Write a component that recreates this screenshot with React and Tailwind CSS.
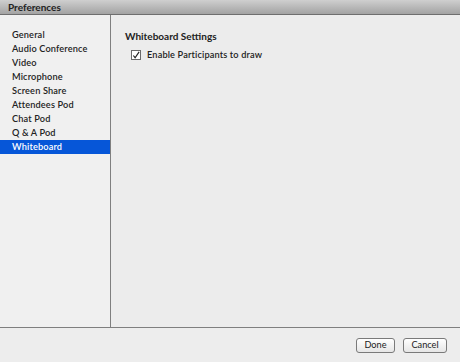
import React from "react";

const items = ["General","Audio Conference","Video","Microphone","Screen Share","Attendees Pod","Chat Pod","Q & A Pod","Whiteboard"];

export default function App() {
  return (
    <div className="w-[460px] h-[362px] flex flex-col bg-[#ededed] text-[#1a1a1a] overflow-hidden" style={{fontFamily: 'Lato, "Open Sans", sans-serif'}}>
      <div className="h-[15px] shrink-0 bg-gradient-to-b from-[#cfcfcf] to-[#a3a3a3] border-b border-[#6e6e6e] flex items-center pl-[8px] text-[10px] font-bold text-[#222] leading-none">
        Preferences
      </div>
      <div className="flex flex-1 border-b border-[#7f7f7f]">
        <div className="w-[111px] shrink-0 border-r border-[#7f7f7f] bg-[#f0f0f0] pt-[13px] flex flex-col">
          {items.map((t) => (
            <div key={t} className={"h-[14px] pl-[12px] flex items-center text-[9.2px] font-semibold tracking-[0.15px] leading-none " + (t === "Whiteboard" ? "bg-[#0656d8] text-white" : "text-[#222]")}>
              {t}
            </div>
          ))}
        </div>
        <div className="flex-1 bg-[#ececec] pl-[14px] pt-[16px]">
          <div className="text-[10px] font-bold leading-none text-[#222]">Whiteboard Settings</div>
          <div className="flex items-center mt-[9px] ml-[6px]">
            <div className="w-[10px] h-[10px] border border-[#6a6a6a] bg-white flex items-center justify-center">
              <svg width="9" height="9" viewBox="0 0 9 9"><path d="M1.5 4.5 L3.5 7 L8 0.5" fill="none" stroke="#222" strokeWidth="1.3"/></svg>
            </div>
            <div className="ml-[6px] text-[9.2px] font-semibold tracking-[0.15px] leading-none text-[#222]">Enable Participants to draw</div>
          </div>
        </div>
      </div>
      <div className="h-[34px] shrink-0 flex items-center justify-end gap-[8px] pr-[13px] bg-[#ededed]">
        <button className="w-[39px] h-[15px] rounded-[3px] border border-[#7a7a7a] bg-gradient-to-b from-white to-[#e6e6e6] text-[9.2px] leading-none text-[#222]">Done</button>
        <button className="w-[44px] h-[15px] rounded-[3px] border border-[#7a7a7a] bg-gradient-to-b from-white to-[#e6e6e6] text-[9.2px] leading-none text-[#222]">Cancel</button>
      </div>
    </div>
  );
}
